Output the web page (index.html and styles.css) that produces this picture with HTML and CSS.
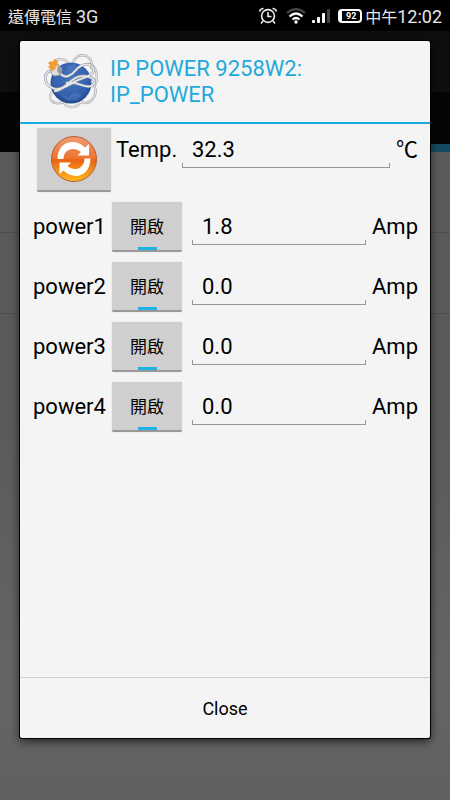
FILE: index.html
```html
<!DOCTYPE html>
<html lang="zh-Hant">
<head>
    <meta charset="UTF-8">
    <meta name="viewport" content="width=device-width, initial-scale=1.0">
    <title>IP POWER 9258W2</title>
    <link rel="stylesheet" href="styles.css">
</head>
<body>
    <header class="status-bar">
        <span class="carrier">遠傳電信 <span class="latin">3G</span></span>
        <svg class="alarm" width="20" height="18" viewBox="0 0 20 18" fill="none" stroke="#eee" stroke-width="1.6">
            <circle cx="10" cy="9" r="6.4"/>
            <path d="M10 5v4.500h3.500M1.500 4.500q1-3 4-3M18.500 4.500q-1-3-4-3M5 14l-2 2.500M15 14l2 2.500"/>
        </svg>
        <svg class="wifi" width="20" height="16" viewBox="0 0 20 16" fill="none" stroke="#fff" stroke-width="2.200">
            <path d="M1 5q9-7.500 18 0" stroke="#444"/>
            <path d="M3.500 8.500q6.500-6 13 0M6.500 11.500q3.500-3 7 0"/>
            <circle cx="10" cy="14" r="1.700" fill="#fff" stroke="none"/>
        </svg>
        <svg class="signal" width="20" height="16" viewBox="0 0 20 16" fill="#fff">
            <rect x="1" y="12" width="3" height="3" rx="1"/>
            <rect x="6" y="9" width="3" height="6" rx="1"/>
            <rect x="11" y="5" width="3" height="10" rx="1"/>
            <rect x="16" y="1" width="3" height="14" rx="1" fill="#444"/>
        </svg>
        <span class="battery">92</span>
        <span class="clock">中午<span class="latin">12:02</span></span>
    </header>

    <div class="screen">
        <!-- 背景の一覧画面 -->
        <div class="backdrop">
            <div class="action-bar"></div>
            <div class="tabs"></div>
            <div class="list-row"></div>
            <div class="list-row"></div>
        </div>

        <main class="dialog" role="dialog" aria-labelledby="dialogTitle">
            <div class="dialog-header">
                <svg class="globe" width="58" height="58" viewBox="0 0 58 58" fill="none">
                    <defs>
                        <radialGradient id="sea" cx="0.500" cy="0.400" r="0.600">
                            <stop offset="0" stop-color="#4673bd"/>
                            <stop offset="0.700" stop-color="#3461ae"/>
                            <stop offset="1" stop-color="#24498c"/>
                        </radialGradient>
                    </defs>
                    <!-- 地球の後ろを通るケーブル -->
                    <g stroke="#a8a8a8" stroke-width="2.400">
                        <path d="M12 10C15 4 24 5 27 12M31 10C34 0 46 0 49 8C50 11 50 14 49 16"/>
                        <path d="M50 12C56 17 56 28 52 33M11 38C4 45 10 53 22 49M20 45C23 57 36 57 40 46M38 49C48 53 57 43 52 32"/>
                    </g>
                    <g stroke="#e6e6e6" stroke-width="1.200">
                        <path d="M12 10C15 4 24 5 27 12M31 10C34 0 46 0 49 8C50 11 50 14 49 16"/>
                        <path d="M50 12C56 17 56 28 52 33M11 38C4 45 10 53 22 49M20 45C23 57 36 57 40 46M38 49C48 53 57 43 52 32"/>
                    </g>
                    <circle cx="29" cy="30" r="20.500" fill="url(#sea)"/>
                    <path d="M25 13l7-2 5 3-5 4-6 1zM19 42l7 2 6-4 8 2-5 5-9 1z" fill="#5b86c8" opacity="0.400"/>
                    <!-- 手前のケーブル -->
                    <g stroke="#8f98a8" stroke-width="2.800">
                        <path d="M18 20C23 27 30 22 34 17S48 8 51 15C54 22 43 24 36 27S21 37 13 36C3 33-1 22 9 17"/>
                        <path d="M12 38C24 38 29 22 42 23C53 24 55 30 49 33C42 36 35 27 24 30"/>
                    </g>
                    <g stroke="#e9e9e9" stroke-width="1.600">
                        <path d="M18 20C23 27 30 22 34 17S48 8 51 15C54 22 43 24 36 27S21 37 13 36C3 33-1 22 9 17"/>
                        <path d="M12 38C24 38 29 22 42 23C53 24 55 30 49 33C42 36 35 27 24 30"/>
                    </g>
                    <path d="M9 15l7-4 4 5-2 6-6 1-3-3z" fill="#dedede" stroke="#999"/>
                    <path d="M16 12l4 4-2 6-3-4z" fill="#9a9a9a"/>
                    <path d="M6 10l3-2 2 1 1-3 4 2-1 5-2-1 1 3-3 3-5-4 2-2z" fill="#f59b2c"/>
                </svg>
                <h1 id="dialogTitle">IP POWER 9258W2:<br>IP_POWER</h1>
            </div>

            <form class="dialog-body">
                <div class="temp-row">
                    <button type="button" class="refresh" aria-label="更新">
                        <svg width="48" height="48" viewBox="0 0 48 48">
                            <defs>
                                <linearGradient id="orange" x1="0" y1="0" x2="0" y2="1">
                                    <stop offset="0" stop-color="#f29a70"/>
                                    <stop offset="0.480" stop-color="#ee7430"/>
                                    <stop offset="0.520" stop-color="#ea6413"/>
                                    <stop offset="1" stop-color="#ffba20"/>
                                </linearGradient>
                            </defs>
                            <circle cx="24" cy="24" r="22.500" fill="url(#orange)" stroke="#b85b35"/>
                            <path d="M7.500 24C7.500 7 24 2 35 12.500l4-3.500v11.500H27.500l3.500-3.500C24 11 13.500 14 13.500 24z" fill="#fff"/>
                            <path d="M40.500 23.500C40.500 41 24 46 13.500 35.500L9.500 39V27.500h11.500l-3.500 3.500C24 37 34.500 34 34.500 23.500z" fill="#fff"/>
                        </svg>
                    </button>
                    <label for="temp">Temp.</label>
                    <input type="text" id="temp" value="32.3">
                    <span class="unit">℃</span>
                </div>
                <div class="power-row">
                    <label for="power1">power1</label>
                    <button type="button" class="toggle" aria-pressed="true">開啟</button>
                    <input type="text" id="power1" value="1.8">
                    <span class="unit">Amp</span>
                </div>
                <div class="power-row">
                    <label for="power2">power2</label>
                    <button type="button" class="toggle" aria-pressed="true">開啟</button>
                    <input type="text" id="power2" value="0.0">
                    <span class="unit">Amp</span>
                </div>
                <div class="power-row">
                    <label for="power3">power3</label>
                    <button type="button" class="toggle" aria-pressed="true">開啟</button>
                    <input type="text" id="power3" value="0.0">
                    <span class="unit">Amp</span>
                </div>
                <div class="power-row">
                    <label for="power4">power4</label>
                    <button type="button" class="toggle" aria-pressed="true">開啟</button>
                    <input type="text" id="power4" value="0.0">
                    <span class="unit">Amp</span>
                </div>
            </form>

            <button type="button" class="close">Close</button>
        </main>
    </div>
</body>
</html>
```

FILE: styles.css
```css
* {
    box-sizing: border-box;
}

body {
    display: flex;
    flex-direction: column;
    min-height: 100vh;
    margin: 0;
    font-family: Roboto, "Noto Sans CJK TC", sans-serif;
    font-size: 22px;
    color: #000;
    background: #000;
}

button,
input {
    font-family: inherit;
    color: inherit;
}

/* ステータスバー */
.status-bar {
    display: flex;
    align-items: center;
    height: 31px;
    padding: 0 8px;
    font-size: 16px;
    color: #e6e6e6;
}

.latin {
    font-size: 18px;
}

.carrier {
    flex: 1;
}

.wifi {
    margin-left: 8px;
}

.signal {
    margin-left: 5px;
}

.battery {
    width: 24px;
    margin: 0 3px 0 7px;
    border: 2px solid #fff;
    border-left-width: 4px;
    border-radius: 4px;
    font-size: 9px;
    font-weight: bold;
    line-height: 10px;
    text-align: center;
    color: #fff;
}

/* 背景とダイアログを重ねる */
.screen {
    flex: 1;
    display: grid;
    grid-template-columns: minmax(0, 1fr);
}

.backdrop,
.dialog {
    grid-area: 1 / 1;
}

.backdrop {
    background: linear-gradient(#5a5a5a 50%, #656565 85%, #606060);
}

.action-bar {
    height: 61px;
    background: #0e0e0e;
}

.tabs {
    height: 60px;
    background:
        linear-gradient(#050505, #050505) left / 50% 100% no-repeat,
        linear-gradient(#050505 52px, #134b62 52px);
}

.list-row {
    height: 81px;
    border-bottom: 1px solid #4d4d4d;
}

/* ダイアログ */
.dialog {
    display: flex;
    flex-direction: column;
    margin: 10px 20px 62px;
    background: #f4f4f4;
    border-radius: 2px;
    box-shadow: 0 0 0 1px #000, 0 3px 10px rgba(0,0,0,0.7);
}

.dialog-header {
    display: flex;
    align-items: center;
    gap: 10px;
    height: 83px;
    padding: 0 22px;
    border-bottom: 2px solid #1aabdf;
}

.globe {
    flex: none;
}

h1 {
    margin: 0;
    font-size: 22px;
    font-weight: normal;
    line-height: 26px;
    color: #1fa9dc;
}

.dialog-body {
    flex: 1;
    padding: 4px 12px 0 13px;
}

.temp-row,
.power-row {
    display: flex;
}

.temp-row {
    height: 74px;
    padding-left: 4px;
    line-height: 44px;
}

.power-row {
    height: 60px;
    line-height: 50px;
}

.refresh,
.toggle {
    padding: 0;
    border: 0;
    border-bottom: 2px solid #999;
    border-radius: 2px;
    background: #cfcfcf;
    box-shadow: 0 0 1px #aaa;
}

.refresh {
    width: 74px;
    height: 64px;
}

.refresh svg {
    display: block;
    margin: 0 auto;
}

.temp-row label {
    width: 66px;
    margin-left: 5px;
}

.power-row label {
    width: 79px;
}

.toggle {
    display: flex;
    flex-direction: column;
    align-items: center;
    width: 70px;
    height: 50px;
    margin-right: 10px;
    font-size: 17px;
    line-height: 50px;
}

.toggle::after {
    content: "";
    width: 19px;
    height: 3px;
    margin-top: -5px;
    background: #1fb3e8;
}

input {
    flex: 1;
    min-width: 0;
    height: 43px;
    padding: 5px 10px 0;
    border: 0;
    font-size: 22px;
    /* 下線と両端の短い縦線 */
    background:
        linear-gradient(#999, #999) left bottom / 1px 5px no-repeat,
        linear-gradient(#999, #999) right bottom / 1px 5px no-repeat,
        linear-gradient(#999, #999) left bottom / 100% 1px no-repeat;
}

.temp-row input {
    height: 40px;
    padding-top: 3px;
}

.unit {
    width: 46px;
    margin-left: 6px;
}

.temp-row .unit {
    width: 22px;
}

.close {
    height: 61px;
    border: 0;
    border-top: 1px solid #d0d0d0;
    background: none;
    font-size: 18px;
}
```
